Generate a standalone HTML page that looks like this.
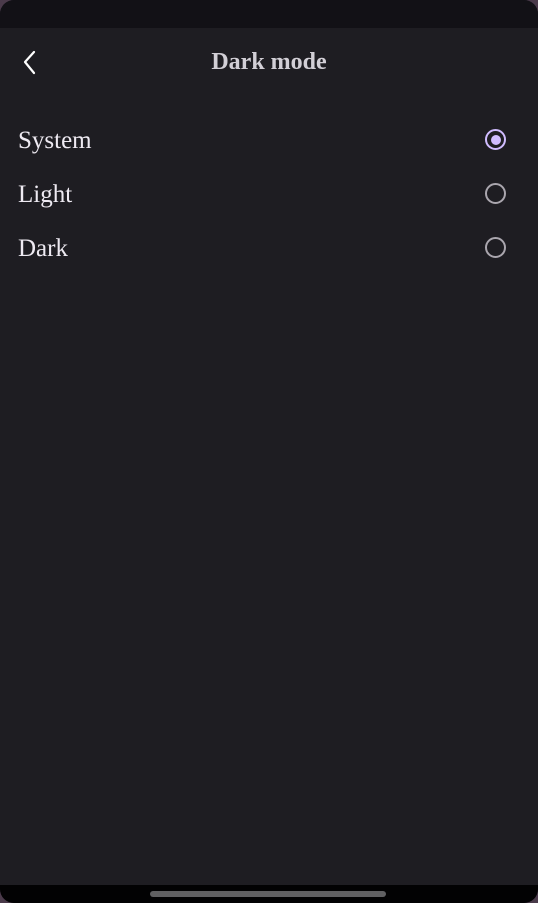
<!DOCTYPE html>
<html><head><style>
html,body{margin:0;padding:0;background:#4a3a4a;}
.ph{position:relative;width:538px;height:903px;overflow:hidden;background:#1e1d22;border-radius:14px;font-family:"Liberation Serif",serif;}
.top{position:absolute;left:0;top:0;width:538px;height:28px;background:#121116;}
.title{position:absolute;left:0;width:538px;top:49px;text-align:center;font-size:24px;font-weight:bold;color:#d2cfd6;}
.item{position:absolute;left:18px;font-size:25px;color:#eeeaf2;}
.r{position:absolute;left:485px;width:17px;height:17px;border:2px solid #aaa6ae;border-radius:50%;}
.bot{position:absolute;left:0;top:885px;width:538px;height:18px;background:#020203;}
.h{position:absolute;left:150px;top:891px;width:236px;height:6px;border-radius:3px;background:#606062;}
</style></head><body>
<div class="ph">
<div class="top"></div>
<svg style="position:absolute;left:20px;top:50px" width="20" height="26" viewBox="0 0 20 26"><path d="M14 2 L5 12 L14 23" stroke="#fff" stroke-width="2.2" fill="none" stroke-linecap="round" stroke-linejoin="round"/></svg>
<div class="title">Dark mode</div>
<div class="item" style="top:127px">System</div>
<div class="item" style="top:181px">Light</div>
<div class="item" style="top:235px">Dark</div>
<div class="r" style="top:129px;border-color:#d0bcff"><div style="position:absolute;left:3.5px;top:3.5px;width:10px;height:10px;border-radius:50%;background:#d0bcff"></div></div>
<div class="r" style="top:183px"></div>
<div class="r" style="top:237px"></div>
<div class="bot"></div>
<div class="h"></div>
</div>
</body></html>
